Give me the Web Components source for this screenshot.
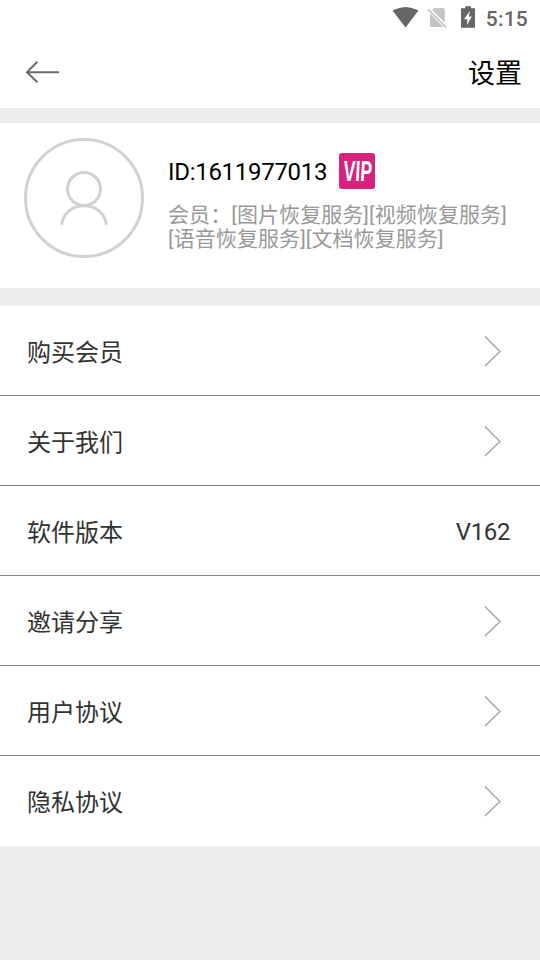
<!DOCTYPE html>
<html lang="zh-CN">
<head>
<meta charset="utf-8">
<title>设置</title>
<style>
html,body{margin:0;height:100%}
body{background:#ececec;font-family:Roboto,"Noto Sans CJK SC",sans-serif;color:#333;overflow:hidden}
</style>
</head>
<body>
<settings-page></settings-page>
<script>
function define(name, html) {
  const t = document.createElement('template');
  t.innerHTML = html;
  customElements.define(name, class extends HTMLElement {
    constructor() {
      super();
      this.attachShadow({ mode: 'open' }).append(t.content.cloneNode(true));
    }
  });
}

define('status-bar', `
<style>
:host{display:flex;height:36px;box-sizing:border-box;justify-content:flex-end;align-items:center;background:#fff;padding-right:12px;color:#666}
svg{display:block;flex:none}
span{font-weight:500;font-size:21px;line-height:36px;letter-spacing:.2px;height:36px;padding-top:1px;box-sizing:border-box;margin-left:10px}
</style>
<svg width="96" height="36" viewBox="0 0 96 36">
  <path d="M12.500 10.600Q25.500 3.200 38.500 10.600L25.500 27.600Z" fill="#666"/>
  <path d="M54.500 8H63Q64.800 8 64.800 9.800V22.800L52.300 10.300ZM50 13.500L63.200 27H51.500Q50 27 50 25.500Z" fill="#c4c4c4"/>
  <path d="M48 9.300L66.200 27.500" stroke="#c4c4c4" stroke-width="1.700"/>
  <path d="M85.300 6.300H91V8.200H95V27.700H81V8.200H85.300Z" fill="#666"/>
  <path d="M90 11L84 19.300H87.200V25L91.800 16.500H88.800Z" fill="#fff"/>
</svg>
<span>5:15</span>`);

define('title-bar', `
<style>
:host{display:flex;height:72px;box-sizing:border-box;justify-content:space-between;align-items:center;padding:0 18px 0 25px;background:#fff;color:#000}
svg{display:block}
span{font-size:27px;line-height:40px;padding-top:4px}
</style>
<svg width="35" height="24" viewBox="0 0 35 24" fill="none" stroke="#6b6b6b" stroke-width="2"><path d="M12.300 1.800L2 12.200L12.300 22.200M2 12.200H34"/></svg>
<span><slot></slot></span>`);

define('user-avatar', `
<style>:host{display:block;width:120px;height:120px;flex:none}svg{display:block}</style>
<svg width="120" height="120" viewBox="0 0 120 120" fill="none" stroke="#d2d2d2" stroke-width="3">
  <circle cx="60" cy="60" r="58.500"/><circle cx="60" cy="51" r="16.500"/>
  <path d="M37.600 87C39 75 48.500 67.800 60 67.800S81 75 82.400 87"/>
</svg>`);

define('vip-badge', `
<style>
:host{display:flex;width:36px;height:36px;border-radius:3px;background:#d8217c;color:#fff;align-items:center;justify-content:center;flex:none;overflow:hidden}
span{font:italic 700 23px/36px "Liberation Sans",sans-serif;transform:scale(.77,1.26) skewX(6deg);letter-spacing:0;white-space:nowrap}
</style><span>VIP</span>`);

define('profile-card', `
<style>
:host{display:flex;height:165px;box-sizing:border-box;margin-top:15px;padding:15px 24px;gap:24px;background:#fff}
.info{flex:1;min-width:0;padding-top:15px}
.id{display:flex;height:36px;align-items:center;gap:12px;color:#000;font-size:24px;line-height:36px;letter-spacing:-.29px}
.id span{padding-top:1px}
.services{margin-top:14px;font-size:21px;line-height:24px;color:#999;white-space:nowrap;letter-spacing:.08px}
.services div{height:24px}
</style>
<user-avatar></user-avatar>
<div class="info">
  <div class="id"><span><slot></slot></span><vip-badge></vip-badge></div>
  <div class="services"><div>会员：[图片恢复服务][视频恢复服务]</div><div>[语音恢复服务][文档恢复服务]</div></div>
</div>`);

define('chevron-icon', `
<style>:host{display:block;padding-right:8px}svg{display:block}</style>
<svg width="19" height="32" viewBox="0 0 19 32" fill="none" stroke="#aaa" stroke-width="1.600"><path d="M2 1.500L16.900 16.500L2 31"/></svg>`);

define('settings-row', `
<style>
:host{display:flex;height:90px;box-sizing:border-box;padding:1px 30px 0 27px;align-items:center;justify-content:space-between;border-bottom:1px solid #888;background:#fff;font-size:24px;line-height:36px}
:host(:last-of-type){border-bottom-color:#fff}
.label{padding-top:4px}
::slotted([slot=end]){padding-top:2px;letter-spacing:-.4px}
</style>
<span class="label"><slot></slot></span><slot name="end"><chevron-icon></chevron-icon></slot>`);

define('settings-list', `
<style>:host{display:flex;flex-direction:column;margin-top:18px}</style><slot></slot>`);

define('settings-page', `
<style>:host{display:flex;flex-direction:column;height:100%}</style>
<status-bar></status-bar>
<title-bar>设置</title-bar>
<profile-card>ID:1611977013</profile-card>
<settings-list>
  <settings-row>购买会员</settings-row>
  <settings-row>关于我们</settings-row>
  <settings-row>软件版本<span slot="end">V162</span></settings-row>
  <settings-row>邀请分享</settings-row>
  <settings-row>用户协议</settings-row>
  <settings-row>隐私协议</settings-row>
</settings-list>`);
</script>
</body>
</html>
